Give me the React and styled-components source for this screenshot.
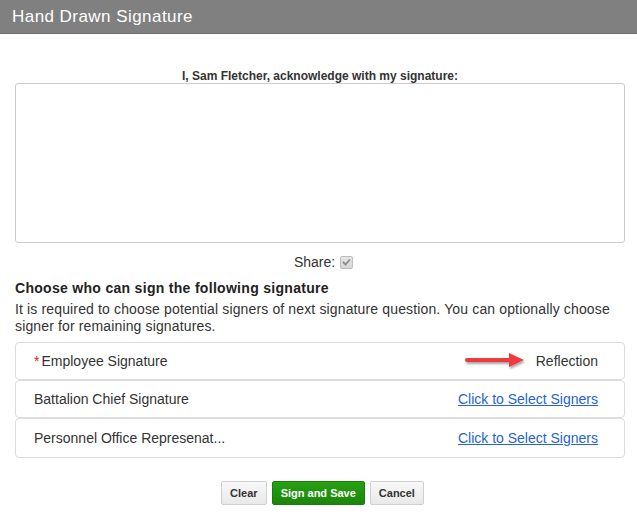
import styled, { createGlobalStyle } from 'styled-components';

const GlobalStyle = createGlobalStyle`
    body {
        margin: 0;
        background: #fff;
        font-family: 'Liberation Sans', Arial, sans-serif;
        color: #333;
    }
`;

const Header = styled.div`
    height: 34px;
    background-color: #808080;
    color: #fff;
    font-size: 17px;
    letter-spacing: 0.45px;
    line-height: 34px;
    padding-left: 12px;
    border-bottom: 1px solid #6f6f6f;
    box-sizing: border-box;
`;

const Body = styled.div`
    padding: 35px 12px 0 15px;
`;

const Acknowledge = styled.div`
    font-size: 12px;
    font-weight: bold;
    text-align: center;
    color: #333;
    line-height: 14px;
`;

const Pad = styled.div`
    height: 160px;
    border: 1px solid #ccc;
    border-radius: 3px;
    box-sizing: border-box;
    background: #fff;
`;

const ShareRow = styled.div`
    display: flex;
    justify-content: center;
    align-items: center;
    gap: 5px;
    margin-top: 11px;
    font-size: 14px;
    color: #333;
    padding-left: 7px;
`;

const Check = styled.span`
    width: 13px;
    height: 13px;
    border: 1px solid #bdbdbd;
    border-radius: 2px;
    background: linear-gradient(#e6e6e6, #d6d6d6);
    box-sizing: border-box;
    display: flex;
    align-items: center;
    justify-content: center;
`;

const Heading = styled.div`
    font-size: 14px;
    font-weight: bold;
    letter-spacing: 0.3px;
    color: #222;
    margin-top: 10px;
    line-height: 17px;
`;

const Description = styled.div`
    font-size: 14px;
    letter-spacing: 0.14px;
    color: #333;
    line-height: 17px;
    margin-top: 4px;
`;

const List = styled.div`
    margin-top: 7px;
    display: flex;
    flex-direction: column;
`;

const Row = styled.div`
    height: ${p => p.$last ? 40 : 38}px;
    border: 1px solid #dcdcdc;
    border-radius: 4px;
    box-sizing: border-box;
    display: flex;
    align-items: center;
    justify-content: space-between;
    padding: 0 26px 0 18px;
    font-size: 14px;
    color: #333;
`;

const Required = styled.span`
    color: #e0201b;
    margin-right: 2px;
`;

const Right = styled.div`
    display: flex;
    align-items: center;
`;

const Link = styled.a`
    color: #2563d6;
    text-decoration: underline;
    cursor: pointer;
`;

const Buttons = styled.div`
    display: flex;
    justify-content: center;
    gap: 5px;
    margin-top: 23px;
    padding-left: 5px;
`;

const Button = styled.button`
    height: 24px;
    padding: 0 ${p => p.$pad}px;
    font-family: 'Liberation Sans', Arial, sans-serif;
    font-size: 11px;
    font-weight: bold;
    border-radius: 2px;
    cursor: pointer;
    color: ${p => p.$primary ? '#fff' : '#333'};
    border: 1px solid ${p => p.$primary ? '#1b7d0b' : '#d0d0d0'};
    background: ${p => p.$primary
        ? 'linear-gradient(#27a012, #1b860a)'
        : 'linear-gradient(#f8f8f8, #e9e9e9)'};
`;

function Arrow() {
    return (
        <svg width="66" height="22" viewBox="0 0 66 22" style={{ marginRight: 8 }}>
            <defs>
                <filter id="sh" x="-20%" y="-50%" width="140%" height="200%">
                    <feDropShadow dx="1" dy="2" stdDeviation="1.2" floodColor="#000" floodOpacity="0.35" />
                </filter>
            </defs>
            <g filter="url(#sh)">
                <rect x="3" y="8" width="48" height="4" rx="2" fill="#ef3b3b" />
                <polygon points="47,3 62,10 47,17" fill="#ef3b3b" />
            </g>
        </svg>
    );
}

export default function App() {
    return (
        <>
            <GlobalStyle />
            <Header>Hand Drawn Signature</Header>
            <Body>
                <Acknowledge>I, Sam Fletcher, acknowledge with my signature:</Acknowledge>
                <Pad />
                <ShareRow>
                    Share:
                    <Check>
                        <svg width="9" height="8" viewBox="0 0 9 8">
                            <path d="M1 4 L3.5 6.5 L8 1.5" fill="none" stroke="#8a8a8a" strokeWidth="1.8" />
                        </svg>
                    </Check>
                </ShareRow>
                <Heading>Choose who can sign the following signature</Heading>
                <Description>
                    It is required to choose potential signers of next signature question. You can optionally choose signer for remaining signatures.
                </Description>
                <List>
                    <Row>
                        <span><Required>*</Required>Employee Signature</span>
                        <Right>
                            <Arrow />
                            Reflection
                        </Right>
                    </Row>
                    <Row>
                        <span>Battalion Chief Signature</span>
                        <Link>Click to Select Signers</Link>
                    </Row>
                    <Row $last>
                        <span>Personnel Office Represenat...</span>
                        <Link>Click to Select Signers</Link>
                    </Row>
                </List>
                <Buttons>
                    <Button $pad={8}>Clear</Button>
                    <Button $primary $pad={8}>Sign and Save</Button>
                    <Button $pad={8}>Cancel</Button>
                </Buttons>
            </Body>
        </>
    );
}
